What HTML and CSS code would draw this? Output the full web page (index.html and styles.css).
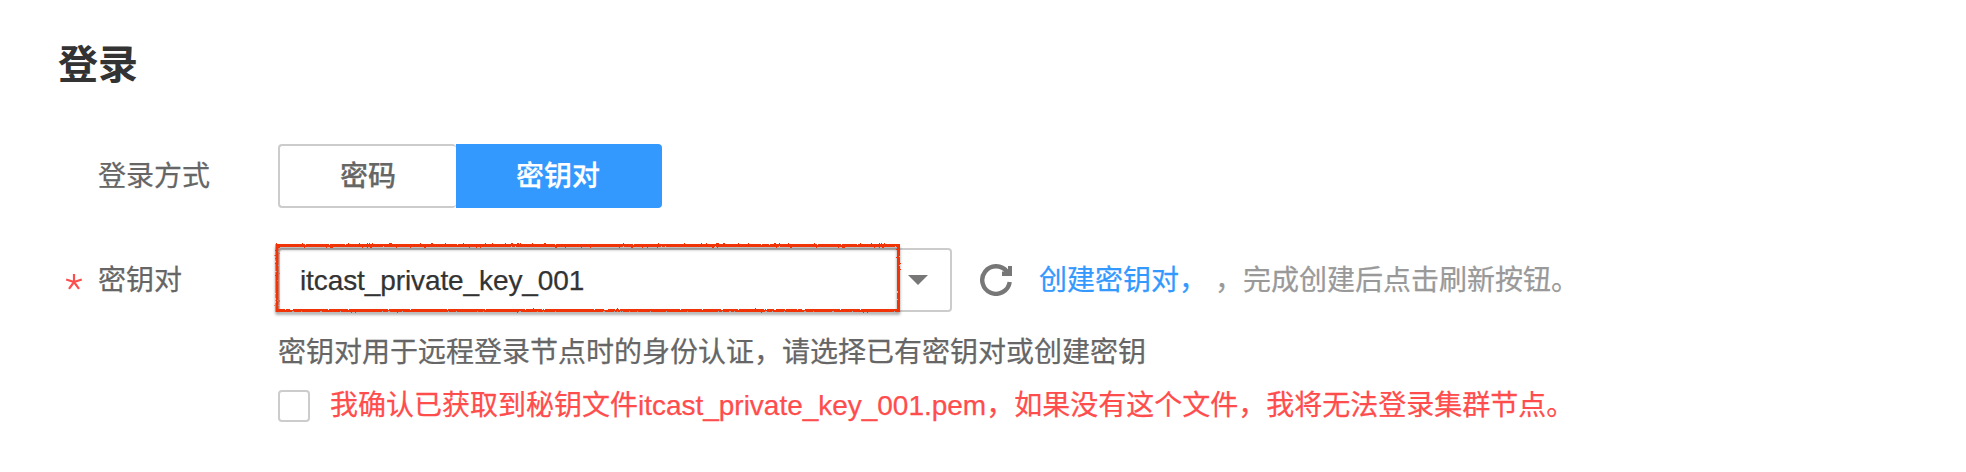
FILE: index.html
```html
<!DOCTYPE html>
<html lang="zh-CN">
<head>
<meta charset="utf-8">
<title>登录</title>
<link rel="stylesheet" href="styles.css">
</head>
<body>
<main class="login">
  <h1 class="title">登录</h1>
  <div class="row">
    <div class="label">登录方式</div>
    <div class="tabs">
      <button class="tab">密码</button>
      <button class="tab tab-active">密钥对</button>
    </div>
  </div>
  <div class="row row-key">
    <div class="label">
      <svg class="required" width="18" height="18" viewBox="0 0 18 18"><path d="M9 9V1M9 9L1.2 6.5M9 9L16.8 6.5M9 9L4 15.8M9 9L14 15.8"/></svg>
      密钥对
    </div>
    <div class="select">
      <span class="value">itcast_private_key_001</span>
      <svg class="arrow" width="20" height="10" viewBox="0 0 20 10"><path d="M0 0H20L10 10Z"/></svg>
      <svg class="marker" width="640" height="84" viewBox="0 0 640 84">
        <defs>
          <filter id="rough" x="0" y="0" width="640" height="84" filterUnits="userSpaceOnUse" color-interpolation-filters="sRGB">
            <feTurbulence type="fractalNoise" baseFrequency="0.5" numOctaves="2" seed="3" result="noise"/>
            <feDisplacementMap in="SourceGraphic" in2="noise" scale="2.4" xChannelSelector="R" yChannelSelector="G"/>
          </filter>
        </defs>
        <rect class="marker-shadow" x="10" y="11" width="621.5" height="65"/>
        <rect class="marker-line" x="10" y="8.5" width="621.5" height="65" filter="url(#rough)"/>
      </svg>
    </div>
    <svg class="refresh" width="32" height="32" viewBox="0 0 32 32"><path class="arc" d="M29.7 18A13.8 13.8 0 1 1 27 7.6"/><path class="head" d="M28 2H32V12H22V7.6H26L28 6Z"/></svg>
    <a class="link">创建密钥对，</a>
    <span class="tip">，完成创建后点击刷新按钮。</span>
  </div>
  <p class="hint">密钥对用于远程登录节点时的身份认证，请选择已有密钥对或创建密钥</p>
  <label class="confirm">
    <span class="checkbox"></span>
    <span class="confirm-text">我确认已获取到秘钥文件<span class="file">itcast_private_key_001.pem</span>，如果没有这个文件，我将无法登录集群节点。</span>
  </label>
</main>
</body>
</html>
```
FILE: styles.css
```css
body {
  margin: 0;
  background: #fff;
  color: #666;
  font: 28px/40px "Liberation Sans", "Noto Sans CJK SC", sans-serif;
  -webkit-text-stroke: 0.25px currentColor;
}
.login {
  padding: 35px 0 0 58px;
  white-space: nowrap;
}
.title {
  margin: 0 0 49px;
  color: #333;
  font-size: 40px;
  line-height: 60px;
  -webkit-text-stroke: 0;
}
.row {
  display: flex;
  align-items: center;
  height: 64px;
}
.row-key {
  margin-top: 40px;
}
.label {
  position: relative;
  box-sizing: border-box;
  width: 220px;
  padding: 2px 0 0 40px;
}
.required {
  position: absolute;
  left: 7px;
  top: 14px;
  fill: none;
  stroke: #ff4c4c;
  stroke-width: 2.2;
}
.tabs {
  display: flex;
}
.tab {
  box-sizing: border-box;
  width: 178px;
  height: 64px;
  padding: 2px 0 0;
  border: 2px solid #ccc;
  border-right: 0;
  border-radius: 4px;
  background: #fff;
  color: #666;
  font: inherit;
  font-weight: 500;
}
.tab-active {
  width: 206px;
  padding-right: 2px;
  border: 0;
  border-radius: 0 4px 4px 0;
  background: #39f;
  color: #fff;
}
.select {
  position: relative;
  box-sizing: border-box;
  display: flex;
  align-items: center;
  justify-content: space-between;
  width: 674px;
  height: 64px;
  padding: 0 22px 0 20px;
  border: 2px solid #ccc;
  border-radius: 4px;
  color: #333;
}
.value {
  padding-top: 2px;
  letter-spacing: -0.1px;
}
.arrow {
  fill: #777;
}
.marker {
  position: absolute;
  left: -13px;
  top: -13px;
  fill: none;
}
.marker-line {
  stroke: #f03408;
  stroke-width: 3;
}
.marker-shadow {
  stroke: rgba(0, 0, 0, 0.4);
  stroke-width: 3;
  filter: blur(1.5px);
}
.refresh {
  margin-left: 28px;
}
.arc {
  fill: none;
  stroke: #777;
  stroke-width: 4.4;
}
.head {
  fill: #777;
}
.link {
  margin-left: 27px;
  padding-top: 2px;
  color: #39f;
}
.tip {
  margin-left: 8px;
  padding-top: 2px;
  color: #999;
}
.hint {
  margin: 21px 0 0 220px;
}
.confirm {
  display: flex;
  align-items: center;
  gap: 20px;
  margin: 13px 0 0 220px;
  color: #ff4c4c;
}
.checkbox {
  box-sizing: border-box;
  width: 32px;
  height: 32px;
  border: 2px solid #ccc;
  border-radius: 4px;
}
.file {
  letter-spacing: -0.02px;
}
```
